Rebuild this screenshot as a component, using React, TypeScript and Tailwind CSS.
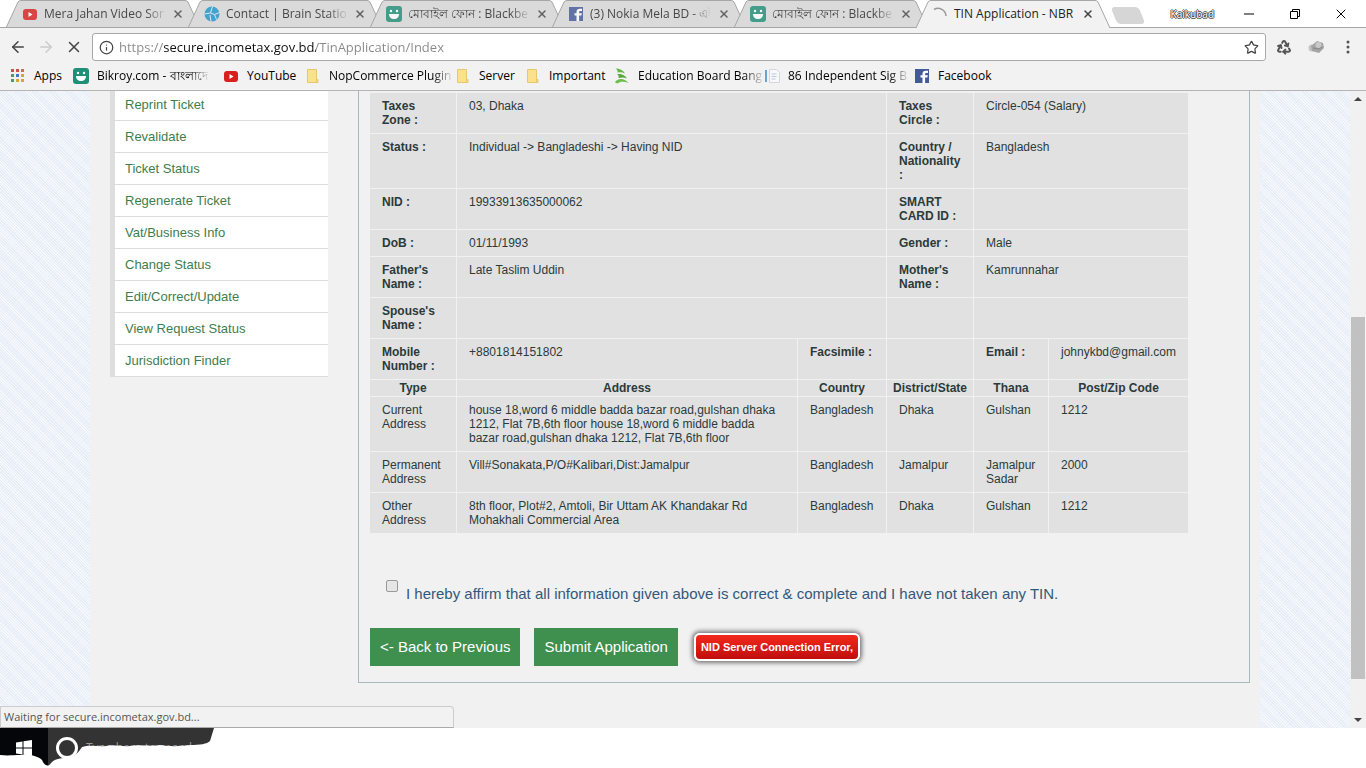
import { ReactNode } from 'react';
import { ArrowLeft, ArrowRight, Info, Minus, Recycle, Star, X } from 'lucide-react';

const uiFont = "font-['Open_Sans','Noto_Sans',sans-serif]";
const pageFont = "font-['Liberation_Sans',Arial,sans-serif]";

function YouTubeIcon() {
  return (
    <svg viewBox="0 0 16 16" className="size-4 shrink-0">
      <rect x="1" y="3" width="14" height="11" rx="3" fill="#d8201f" />
      <path d="M6.500 6v5l4-2.500z" fill="#fff" />
    </svg>
  );
}

function StationIcon() {
  return (
    <svg viewBox="0 0 16 16" className="size-4 shrink-0">
      <circle cx="8" cy="8" r="7.500" fill="#1f96cc" />
      <path d="M0.500 8l6-1 2-6.500M6.500 7l4 1.500 5-2M10.500 8.500l2 5M6 9l1 6.500" stroke="#d9eef6" strokeWidth="1" fill="none" />
    </svg>
  );
}

function BikroyIcon() {
  return (
    <svg viewBox="0 0 16 16" className="size-4 shrink-0">
      <rect width="16" height="16" rx="3" fill="#1f8f77" />
      <circle cx="5" cy="5" r="1.2" fill="#fff" />
      <circle cx="11" cy="5" r="1.2" fill="#fff" />
      <path d="M3 8h10c0 3-2 5-5 5S3 11 3 8z" fill="#fff" />
    </svg>
  );
}

function FacebookIcon() {
  return (
    <svg viewBox="0 0 16 16" className="size-4 shrink-0">
      <rect x="1" y="1" width="14" height="14" fill="#435a98" />
      <path d="M8.500 15V9.500H6.500V7.300h2V6c0-2 1.200-3.200 3.200-3.200H14v2.200h-1.600c-.9 0-1.300.4-1.300 1.200v1.100h2.700l-.4 2.200h-2.300V15z" fill="#fff" />
    </svg>
  );
}

function FolderIcon() {
  return (
    <svg viewBox="0 0 16 16" className="size-4 shrink-0">
      <path d="M2.500 1.500h9v10h1.500v3h-10.500z" fill="#fbe18c" stroke="#e6c96e" />
      <path d="M11.500 10.500v4" stroke="#e6c96e" />
    </svg>
  );
}

function EducationIcon() {
  return (
    <svg viewBox="0 0 16 16" className="size-4 shrink-0">
      <path d="M1.500 0.500c4 0 7.500 1.500 9.500 5C8 4 6 4 3.500 4.500 4 3 3 1.500 1.500 0.500z" fill="#63b345" />
      <path d="M3 6c4.500-.5 8 1 10 4.500-3-1.500-5.500-1-8.500-.5C5 8.500 4.500 7 3 6z" fill="#55a63a" />
      <path d="M1 14.500c1.500-4 9-5.500 13.500.5-4-1.500-8-2-11 .5z" fill="#6fbd4f" />
    </svg>
  );
}

function DocumentIcon() {
  return (
    <svg viewBox="0 0 16 16" className="size-4 shrink-0">
      <rect x="1" y="2" width="2" height="12" fill="#6ea2cc" />
      <path d="M5.500 1.500h7l3 3v10h-10z" fill="#f8f8f8" stroke="#d3d7dc" />
      <path d="M7.500 6h5M7.500 8.500h5M7.500 11h4" stroke="#b7c9da" />
    </svg>
  );
}

function AppsIcon() {
  const colors = ['#c8524a', '#c8524a', '#d06a52', '#4a9a63', '#4a78c0', '#d8a53c', '#4a9a63', '#d8a53c', '#d8a53c'];
  return (
    <svg viewBox="0 0 16 16" className="size-4 shrink-0">
      {colors.map((color, i) => (
        <rect key={i} x={1 + (i % 3) * 5} y={1 + Math.floor(i / 3) * 5} width="3" height="3" fill={color} />
      ))}
    </svg>
  );
}

function SpinnerIcon() {
  return (
    <svg viewBox="0 0 16 16" className="size-4 shrink-0">
      <path d="M2 3.500a8 8 0 0 1 12 6.500" fill="none" stroke="#999" strokeWidth="1.500" />
    </svg>
  );
}

const tabs: { icon: ReactNode; title: string; active?: boolean }[] = [
  { icon: <YouTubeIcon />, title: 'Mera Jahan Video Song' },
  { icon: <StationIcon />, title: 'Contact | Brain Station' },
  { icon: <BikroyIcon />, title: 'মোবাইল ফোন : Blackbe' },
  { icon: <FacebookIcon />, title: '(3) Nokia Mela BD - এই' },
  { icon: <BikroyIcon />, title: 'মোবাইল ফোন : Blackbe' },
  { icon: <SpinnerIcon />, title: 'TIN Application - NBR', active: true },
];

const fade = '[mask-image:linear-gradient(to_right,#000_85%,#0002)]';

const bookmarks = [
  { icon: <AppsIcon />, label: 'Apps', width: 'w-[63px]' },
  { icon: <BikroyIcon />, label: 'Bikroy.com - বাংলাদে', width: 'w-[150px]', mask: fade },
  { icon: <YouTubeIcon />, label: 'YouTube', width: 'w-[82px]' },
  { icon: <FolderIcon />, label: 'NopCommerce Plugin', width: 'w-[150px]', mask: fade },
  { icon: <FolderIcon />, label: 'Server', width: 'w-[70px]' },
  { icon: <FolderIcon />, label: 'Important', width: 'w-[89px]' },
  { icon: <EducationIcon />, label: 'Education Board Bang', width: 'w-[150px]', mask: fade },
  { icon: <DocumentIcon />, label: '86 Independent Sig B', width: 'w-[150px]', mask: fade },
  { icon: <FacebookIcon />, label: 'Facebook', width: 'w-[90px]' },
];

const menu = [
  'Reprint Ticket',
  'Revalidate',
  'Ticket Status',
  'Regenerate Ticket',
  'Vat/Business Info',
  'Change Status',
  'Edit/Correct/Update',
  'View Request Status',
  'Jurisdiction Finder',
];

const details = [
  ['Taxes Zone :', '03, Dhaka', 'Taxes Circle :', 'Circle-054 (Salary)'],
  ['Status :', 'Individual -> Bangladeshi -> Having NID', 'Country / Nationality :', 'Bangladesh'],
  ['NID :', '19933913635000062', 'SMART CARD ID :', ''],
  ['DoB :', '01/11/1993', 'Gender :', 'Male'],
  ["Father's Name :", 'Late Taslim Uddin', "Mother's Name :", 'Kamrunnahar'],
  ["Spouse's Name :", '', '', ''],
];

const addresses = [
  [
    'Current Address',
    'house 18,word 6 middle badda bazar road,gulshan dhaka 1212, Flat 7B,6th floor house 18,word 6 middle badda bazar road,gulshan dhaka 1212, Flat 7B,6th floor',
    'Bangladesh',
    'Dhaka',
    'Gulshan',
    '1212',
  ],
  ['Permanent Address', 'Vill#Sonakata,P/O#Kalibari,Dist:Jamalpur', 'Bangladesh', 'Jamalpur', 'Jamalpur Sadar', '2000'],
  [
    'Other Address',
    '8th floor, Plot#2, Amtoli, Bir Uttam AK Khandakar Rd Mohakhali Commercial Area',
    'Bangladesh',
    'Dhaka',
    'Gulshan',
    '1212',
  ],
];

const cell = 'border-r border-b border-[#f1f1f1] px-3 py-1.5 text-left align-top';
const headCell = 'border-r border-b border-[#f1f1f1] py-px text-center font-bold whitespace-nowrap';

function TabStrip() {
  return (
    <div className="flex h-7 shrink-0 bg-white shadow-[inset_0_-1px_#a6a6a6]">
      <div className="flex min-w-0 pl-1.5">
        {tabs.map((tab, i) => (
          <div key={i} className={`relative -mr-3 flex h-7 w-[194px] items-center pr-3.5 pl-4 ${tab.active ? 'z-10' : ''}`}>
            <svg viewBox="0 0 194 28" preserveAspectRatio="none" className="absolute inset-0 size-full">
              <path
                d="M0 28 L12 2 Q13 0.500 15 0.500 H179 Q181 0.500 182 2 L194 28"
                fill={tab.active ? '#f2f2f2' : '#dadada'}
                stroke="#a6a6a6"
              />
              {!tab.active && <path d="M0 27.500H194" stroke="#a6a6a6" />}
            </svg>
            <div className={`relative flex min-w-0 flex-1 items-center gap-1.5 ${tab.active ? '' : 'opacity-80'}`}>
              {tab.icon}
              <span className={`min-w-0 flex-1 text-xs whitespace-nowrap text-[#222] ${tab.active ? '' : fade}`}>{tab.title}</span>
              <button aria-label="Close tab" className="p-0.5">
                <X className="size-3 text-[#444]" strokeWidth={3} />
              </button>
            </div>
          </div>
        ))}
      </div>
      <button aria-label="New tab" className="mt-[7px] ml-4 h-[17px] w-7 skew-x-[22deg] rounded-sm bg-[#d6d6d6]" />
      <div className="ml-auto flex items-center pr-0.5">
        <span className="mr-3 text-[10px] text-white [text-shadow:1px_0_#444,-1px_0_#444,0_1px_#444,0_-1px_#444]">Kaikubad</span>
        <button aria-label="Minimize" className="flex w-[46px] justify-center">
          <Minus className="size-4" strokeWidth={1.5} />
        </button>
        <button aria-label="Restore" className="flex w-[46px] justify-center">
          <svg viewBox="0 0 12 12" className="size-3" fill="none" stroke="#000">
            <path d="M1.500 3.500h7v7h-7zM3.500 3.500v-2h7v7h-2" />
          </svg>
        </button>
        <button aria-label="Close" className="flex w-[46px] justify-center">
          <X className="size-4" strokeWidth={1.5} />
        </button>
      </div>
    </div>
  );
}

function Toolbar() {
  return (
    <div className="flex h-9 shrink-0 items-center bg-[#f2f2f2] pt-0.5">
      <div className="flex w-[92px] shrink-0 items-center gap-2.5 pl-[9px]">
        <button aria-label="Back">
          <ArrowLeft className="size-[18px] text-[#444]" />
        </button>
        <button aria-label="Forward">
          <ArrowRight className="size-[18px] text-[#ccc]" />
        </button>
        <button aria-label="Stop">
          <X className="size-[18px] text-[#444]" />
        </button>
      </div>
      <div className="flex h-7 flex-1 items-center rounded-[3px] border border-[#a9a9a9] bg-white px-1.5">
        <Info className="size-[15px] text-[#444]" />
        <input
          aria-label="Address"
          defaultValue="https://secure.incometax.gov.bd/TinApplication/Index"
          className="ml-[5px] h-6 flex-1 bg-[linear-gradient(to_right,#888_45px,#111_45px,#111_197px,#888_197px)] bg-clip-text text-[13px] text-transparent outline-none"
        />
        <button aria-label="Bookmark this page">
          <Star className="size-[15px] text-[#444]" />
        </button>
      </div>
      <div className="flex w-[100px] shrink-0 items-center justify-between pr-2.5 pl-2.5">
        <button aria-label="Recycle">
          <Recycle className="size-4 text-[#555]" strokeWidth={3} />
        </button>
        <button aria-label="Extension">
          <svg viewBox="0 0 16 14" className="h-3.5 w-4">
            <circle cx="4" cy="8" r="3.500" fill="#c4c4c4" />
            <path d="M3 6l6-5 6 2 1 5-5 5-7-2z" fill="#a4a4a4" />
            <circle cx="10.500" cy="5" r="3" fill="#c9c9c9" />
            <path d="M5 8l6 1 3-2" stroke="#888" fill="none" />
          </svg>
        </button>
        <button aria-label="Menu">
          <svg viewBox="0 0 16 16" className="size-4" fill="#555">
            <circle cx="8" cy="3" r="1.500" />
            <circle cx="8" cy="8" r="1.500" />
            <circle cx="8" cy="13" r="1.500" />
          </svg>
        </button>
      </div>
    </div>
  );
}

function Bookmarks() {
  return (
    <nav className="flex h-[27px] shrink-0 items-center border-b border-[#b4b4b4] bg-[#f2f2f2] pb-0.5 pl-2.5 text-xs text-black">
      {bookmarks.map((item) => (
        <a key={item.label} href="#" className={`flex shrink-0 items-center gap-2 ${item.width}`}>
          {item.icon}
          <span className={`whitespace-nowrap ${item.mask ?? ''}`}>{item.label}</span>
        </a>
      ))}
    </nav>
  );
}

function Sidebar() {
  return (
    <ul className="w-[218px] shrink-0 self-start text-[13px] leading-4 text-[#3f7d4c]">
      {menu.map((item) => (
        <li key={item} className="border-b border-l-[5px] border-b-[#dcdcdc] border-l-[#dedede] bg-white pt-2 pb-[7px] pl-2.5 first:pt-1.5">
          <a href="#">{item}</a>
        </li>
      ))}
    </ul>
  );
}

function TinTable() {
  return (
    <table className="w-[819px] table-fixed border-separate border-spacing-0 bg-[#e1e1e1] text-xs leading-[14px] text-[#2b3a3a]">
      <colgroup>
        <col className="w-[87px]" />
        <col />
        <col className="w-[89px]" />
        <col className="w-[87px]" />
        <col className="w-[75px]" />
        <col className="w-[140px]" />
      </colgroup>
      <tbody>
        {details.map((row) => (
          <tr key={row[0]}>
            <th className={cell}>{row[0]}</th>
            <td className={cell} colSpan={2}>{row[1]}</td>
            <th className={cell}>{row[2]}</th>
            <td className={cell} colSpan={2}>{row[3]}</td>
          </tr>
        ))}
        <tr>
          <th className={cell}>Mobile Number :</th>
          <td className={cell}>+8801814151802</td>
          <th className={cell}>Facsimile :</th>
          <td className={cell} />
          <th className={cell}>Email :</th>
          <td className={cell}>johnykbd@gmail.com</td>
        </tr>
        <tr>
          {['Type', 'Address', 'Country', 'District/State', 'Thana', 'Post/Zip Code'].map((name) => (
            <th key={name} className={headCell}>{name}</th>
          ))}
        </tr>
        {addresses.map((row) => (
          <tr key={row[0]}>
            {row.map((value, i) => (
              <td key={i} className={cell}>{value}</td>
            ))}
          </tr>
        ))}
      </tbody>
    </table>
  );
}

function Scrollbar() {
  return (
    <div className="flex w-4 shrink-0 flex-col items-center bg-[#f1f1f1] py-1.5">
      <svg viewBox="0 0 8 4" className="h-1 w-2" fill="#444">
        <path d="M0 4l4-4 4 4z" />
      </svg>
      <div className="flex w-full flex-1 flex-col px-px">
        <div className="flex-[216]" />
        <div className="flex-[362] bg-[#c1c1c1]" />
        <div className="flex-[39]" />
      </div>
      <svg viewBox="0 0 8 4" className="h-1 w-2" fill="#444">
        <path d="M0 0l4 4 4-4z" />
      </svg>
    </div>
  );
}

function Taskbar() {
  return (
    <footer className="relative flex h-10 shrink-0 bg-white">
      <button aria-label="Start" className="flex w-12 items-center justify-center bg-[#05060a]">
        <svg viewBox="0 0 16 16" className="size-4" fill="#fff">
          <path d="M0 2.500l6.500-1v6H0zM7.500 1.300L16 0v7.500H7.500zM0 8.500h6.500v6L0 13.500zM7.500 8.500H16V16l-8.500-1.300z" />
        </svg>
      </button>
      <label className="flex w-[168px] items-center gap-2 bg-[#333] pl-2">
        <span className="size-[22px] shrink-0 rounded-full border-[3px] border-white" />
        <input aria-label="Search" placeholder="Type here to search" className="min-w-0 flex-1 text-xs placeholder:text-[#999]" />
      </label>
      {/* torn paper edge over the lower part of the bar */}
      <svg viewBox="0 0 216 40" className="pointer-events-none absolute top-0 left-0 h-10 w-[216px]" fill="#fff">
        <path d="M0 27C8 28 14 27 20 27C30 26 38 28 42 32C44 37 48 40 51 35C56 30 62 30 68 30C74 29 79 24 82 19C90 16 98 19 106 18C114 16 122 19 130 18C140 16 150 19 160 17C172 19 182 18 190 17C200 17 207 16 210 13L214 0H216V40H0Z" />
      </svg>
    </footer>
  );
}

export default function App() {
  return (
    <div className={`flex h-screen flex-col overflow-hidden bg-white ${uiFont}`}>
      <TabStrip />
      <Toolbar />
      <Bookmarks />
      <div className="relative flex min-h-0 flex-1">
        <main
          className={`flex-1 overflow-hidden bg-[#e9eff8] bg-[repeating-linear-gradient(45deg,#ffffff88_0_1px,transparent_1px_2px),repeating-linear-gradient(-45deg,#dbe5f266_0_1px,transparent_1px_3px)] ${pageFont}`}
        >
          <div className="mx-auto flex h-full max-w-[1170px] items-start gap-[30px] bg-[#f1f1f1] pr-2.5 pl-5">
            <Sidebar />
            <section className="flex-1 border-x border-b border-[#a9b9bb] pt-0.5 pb-4 pl-[11px]">
              <TinTable />
              <label className="mt-[46px] flex items-start gap-2 pl-4 text-[15px] leading-7 text-[#34587a]">
                <input type="checkbox" className="size-3 shrink-0 appearance-none rounded-xs border border-[#999] bg-[#e6e6e6]" />
                I hereby affirm that all information given above is correct &amp; complete and I have not taken any TIN.
              </label>
              <div className="mt-5 flex items-center">
                <button className="h-[38px] bg-[#3f8f4f] px-2.5 text-[15px] text-white">&lt;- Back to Previous</button>
                <button className="ml-3.5 h-[38px] bg-[#3f8f4f] px-2.5 text-[15px] text-white">Submit Application</button>
                <div
                  role="alert"
                  className="ml-4 rounded-md border-2 border-white bg-linear-to-b from-[#f3281c] to-[#c00d0d] px-[5px] py-1 text-[11px] leading-4 font-bold text-white shadow-[0_0_4px_2px_#777]"
                >
                  NID Server Connection Error,
                </div>
              </div>
            </section>
          </div>
        </main>
        <Scrollbar />
        <div className="absolute bottom-0 left-0 w-[454px] rounded-tr border border-b-[#aaa] border-[#ccc] bg-[#f2f2f2] px-[3px] text-[11px] leading-5 text-[#555]">
          Waiting for secure.incometax.gov.bd...
        </div>
      </div>
      <Taskbar />
    </div>
  );
}
